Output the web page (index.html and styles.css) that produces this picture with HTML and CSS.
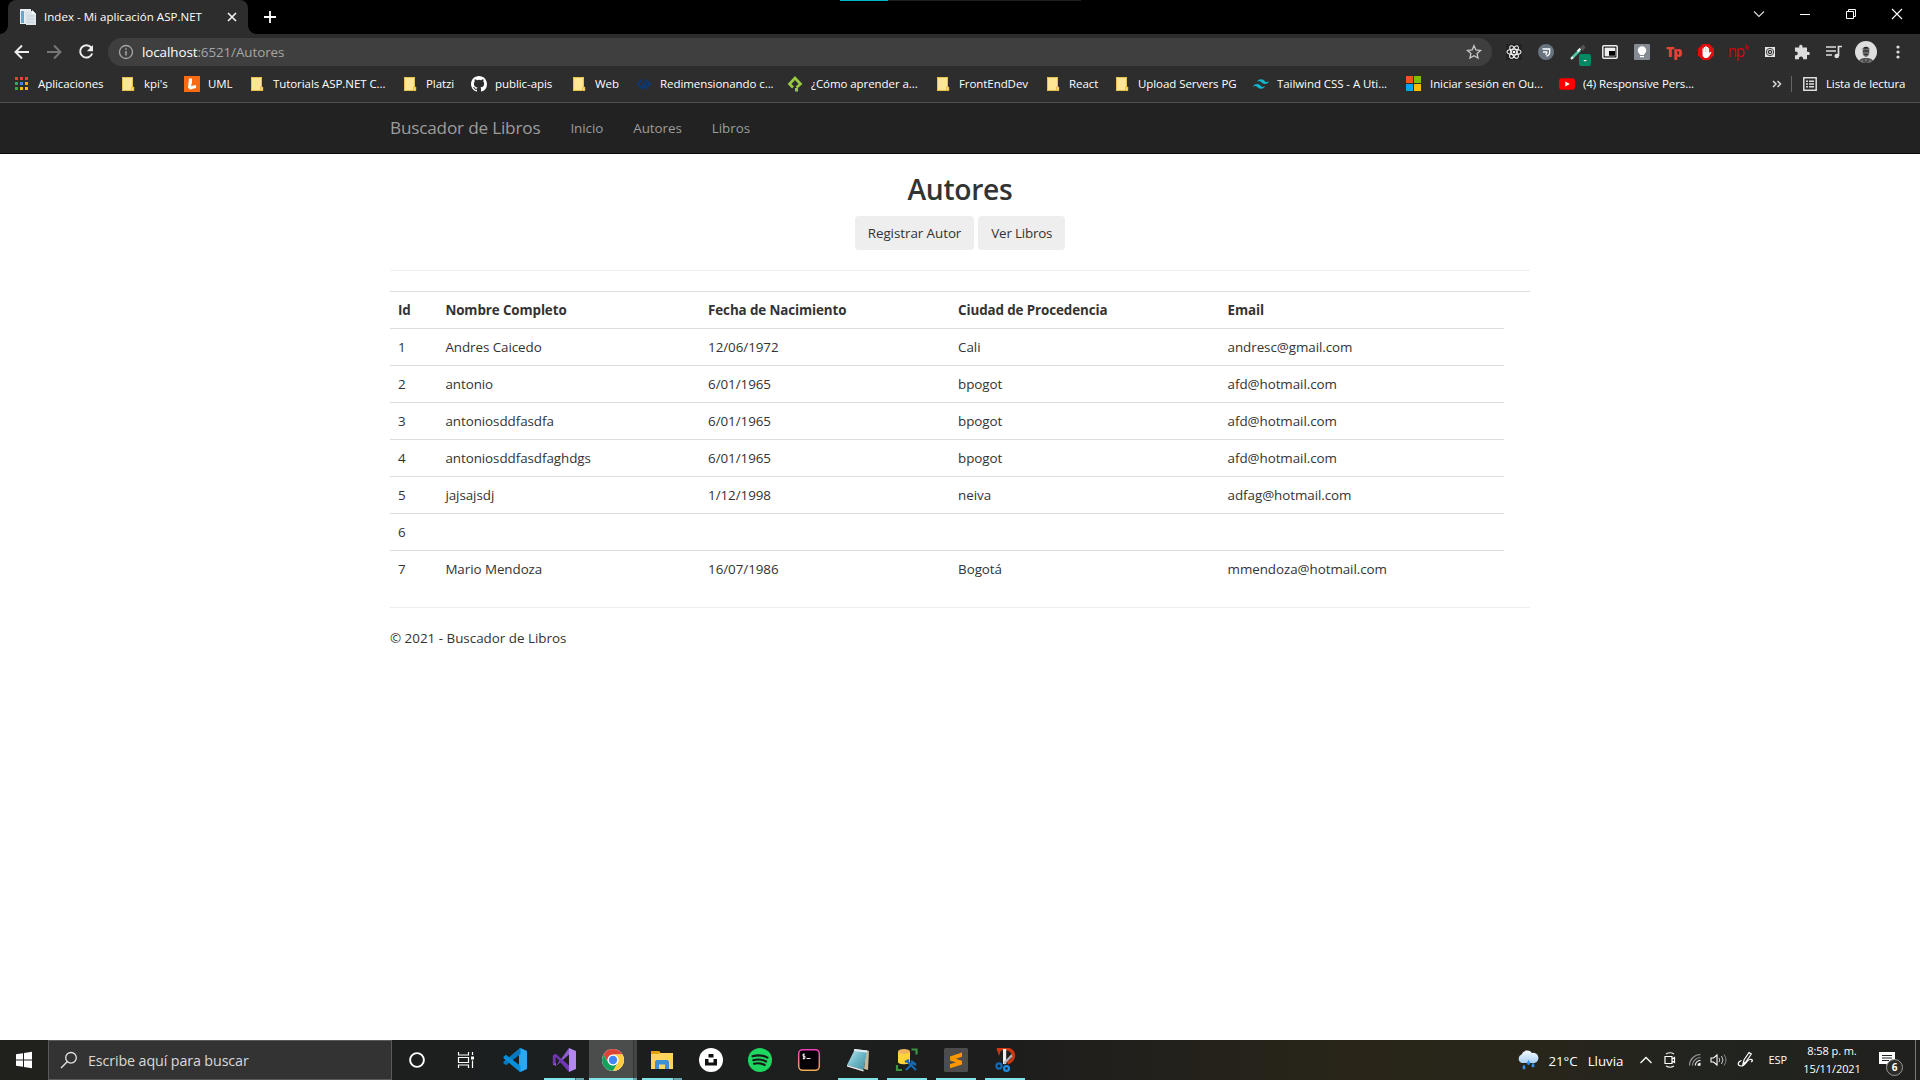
FILE: index.html
```html
<!DOCTYPE html>
<html lang="es">
<head>
<meta charset="utf-8">
<title>Index - Mi aplicación ASP.NET</title>
<link rel="stylesheet" href="styles.css">
</head>
<body>
<svg class="defs" width="0" height="0" aria-hidden="true">
  <symbol id="folder" viewBox="0 0 16 16"><path d="M2 1h11v10h1v4H2z" fill="#ffe694"/><path d="M2.5 1.5h10v9.5M13 11v3.500H2.500v-13" fill="none" stroke="#e8c04c"/><path d="M11.500 11h2.300v3.500h-2.300z" fill="#ffe07c" stroke="#e3b53b" stroke-width=".8"/></symbol>
</svg>
<div class="screen">
  <header class="browser">
    <div class="tabstrip">
      <div class="tab">
        <svg width="16" height="16" viewBox="0 0 16 16"><path d="M0 0h11v15H0z" fill="#e9edf0"/><path d="M1 2h3v12H1z" fill="#68a5cd"/><path d="M5 2h8l3 3v11H6z" fill="#dce5ea"/><path d="M12 1v4h4z" fill="#fff"/><path d="M7 7h7M7 10h7M7 13h7" stroke="#c3cfd6"/></svg>
        <span class="tab-title">Index - Mi aplicación ASP.NET</span>
        <svg class="tab-close" width="10" height="10" viewBox="0 0 10 10"><path d="M1 1l8 8M9 1l-8 8" stroke="#f1f1f1" stroke-width="1.700"/></svg>
      </div>
      <svg class="new-tab" width="12" height="12" viewBox="0 0 12 12"><path d="M6 0v12M0 6h12" stroke="#fff" stroke-width="1.800"/></svg>
      <div class="load-strip"><i></i><b></b></div>
      <div class="window-controls">
        <span><svg width="12" height="12" viewBox="0 0 12 12"><path d="M1 3.500l5 5 5-5" fill="none" stroke="#ddd" stroke-width="1.100"/></svg></span>
        <span><svg width="12" height="12" viewBox="0 0 12 12"><path d="M1 6.500h10" stroke="#fff"/></svg></span>
        <span><svg width="12" height="12" viewBox="0 0 12 12"><path d="M1.500 3.500h7v7h-7zM3.500 3.500v-2h7v7h-2" fill="none" stroke="#fff"/></svg></span>
        <span><svg width="12" height="12" viewBox="0 0 12 12"><path d="M1 1l10 10M11 1L1 11" stroke="#fff" stroke-width="1.100"/></svg></span>
      </div>
    </div>
    <div class="toolbar">
      <div class="nav-buttons">
        <svg width="16" height="16" viewBox="0 0 16 16"><path d="M15 8H2M8 1.500L1.500 8 8 14.500" fill="none" stroke="#eee" stroke-width="1.900"/></svg>
        <svg width="16" height="16" viewBox="0 0 16 16"><path d="M1 8h13M8 1.500L14.500 8 8 14.500" fill="none" stroke="#777" stroke-width="1.900"/></svg>
        <svg width="16" height="16" viewBox="0 0 16 16"><path d="M13.200 3.500A6.200 6.200 0 1 0 14.200 9.500" fill="none" stroke="#eee" stroke-width="2"/><path d="M15 1v6.200H8.800z" fill="#eee"/></svg>
      </div>
      <div class="omnibox">
        <svg width="16" height="16" viewBox="0 0 16 16"><circle cx="8" cy="8" r="6.500" fill="none" stroke="#a6a6a6" stroke-width="1.300"/><path d="M8 7v4.500M8 4.200v1.600" stroke="#a6a6a6" stroke-width="1.500"/></svg>
        <span class="url"><em>localhost</em>:6521/Autores</span>
        <svg width="16" height="16" viewBox="0 0 16 16"><path d="M8 1.700l1.900 4.200 4.600.5-3.400 3.100.9 4.500-4-2.300-4 2.300.9-4.500L1.500 6.400l4.600-.5z" fill="none" stroke="#c9c9c9" stroke-width="1.300"/></svg>
      </div>
      <div class="extensions">
        <span><svg width="16" height="16" viewBox="0 0 16 16"><path d="M0 0h16v16H0z" fill="#222"/><g fill="none" stroke="#eee" stroke-width="1.100"><ellipse cx="8" cy="8" rx="7" ry="2.700"/><ellipse cx="8" cy="8" rx="7" ry="2.700" transform="rotate(60 8 8)"/><ellipse cx="8" cy="8" rx="7" ry="2.700" transform="rotate(120 8 8)"/></g><circle cx="8" cy="8" r="1.300" fill="#fff"/></svg></span>
        <span><svg width="16" height="16" viewBox="0 0 16 16"><circle cx="8" cy="8" r="8" fill="#68747f"/><path d="M4.500 5h7.200v3c0 2.200-1 3.600-3.200 4.200M5 8h3.800v.8c0 1-.6 1.600-1.500 1.900" fill="none" stroke="#fff" stroke-width="1.300"/></svg></span>
        <span class="dropper"><svg width="18" height="16" viewBox="0 0 18 16"><path d="M3 14L11 6" stroke="#52c4a3" stroke-width="2.600"/><path d="M2 15l2-2M8.500 7.500l3-3" stroke="#e8f5f0" stroke-width="2.200"/><path d="M11 4l3 3 2.500-4L14 .5z" fill="#555"/></svg><b>-</b></span>
        <span><svg width="16" height="16" viewBox="0 0 16 16"><rect x=".8" y="1.800" width="14.400" height="12.400" rx="1" fill="#222" stroke="#ededed" stroke-width="1.500"/><path d="M3 4h10v8H3z" fill="#555" stroke="#ccc" stroke-width=".8"/><path d="M7 7h6v4.500H7z" fill="#000"/><path d="M3 4h10v3H7v5H3z" fill="#eee"/></svg></span>
        <span><svg width="16" height="16" viewBox="0 0 16 16"><rect width="16" height="16" rx="1" fill="#858b92"/><circle cx="8" cy="6.500" r="4.200" fill="#fff"/><path d="M6 9h4v2H6zM6 12h4v1.200H6z" fill="#fff"/></svg></span>
        <span class="tp">Tp</span>
        <span><svg width="16" height="16" viewBox="0 0 16 16"><path d="M4.700 0h6.600L16 4.700v6.600L11.300 16H4.700L0 11.300V4.700z" fill="#e40d0d"/><path d="M4.500 8V4.500h1.300V3h1.400v-.7h1.500V3h1.400v1.300h1V9l1.400-1.300 1 .7-2.700 4.300-1.700 1.200H6.700L4.700 12z" fill="#fff"/><path d="M5.900 4v4M7.500 3v5M9.200 3.500V8" stroke="#e88" stroke-width=".35"/></svg></span>
        <span class="np">np<svg width="4" height="7" viewBox="0 0 4 7"><path d="M1 0v4h1.500M3 2v4" fill="none" stroke="#d8000c" stroke-width="1.200"/></svg></span>
        <span><svg width="10" height="10" viewBox="0 0 10 10"><path d="M0 0h10v10H0z" fill="#e6e6e6"/><circle cx="5" cy="5" r="3.700" fill="none" stroke="#444"/><circle cx="5" cy="5" r="1.800" fill="#aaa" stroke="#222"/></svg></span>
        <span><svg width="16" height="16" viewBox="0 0 16 16"><path d="M1 3.500h4.300C4.700 1.500 5.600.7 6.800.7s2.200.8 1.600 2.800H13v4.300c2-.5 2.800.3 2.800 1.600S15 11.400 13 10.900V15.200H9c.4-1.900-.6-2.700-2-2.700s-2.400.8-2 2.700H1v-4c1.900.4 2.700-.5 2.700-1.800S2.900 7.300 1 7.700z" fill="#ddd"/></svg></span>
        <span><svg width="16" height="14" viewBox="0 0 16 14"><path d="M0 2h10M0 6h10M0 10h6" stroke="#ddd" stroke-width="1.600"/><path d="M12.500 11V1.500H16" fill="none" stroke="#ddd" stroke-width="1.700"/><circle cx="10.700" cy="11" r="2.300" fill="#ddd"/></svg></span>
        <span class="avatar"><svg width="22" height="22" viewBox="0 0 22 22"><clipPath id="av"><circle cx="11" cy="11" r="11"/></clipPath><g clip-path="url(#av)"><path d="M0 0h22v22H0z" fill="#dedede"/><path d="M3 22c1-4 4-5 8-5s7 1 8 5z" fill="#4c4c4c"/><ellipse cx="11" cy="11" rx="3.400" ry="5" fill="#666"/><path d="M7.200 9.500c0-5 7.600-5 7.600 0l-1-2H8.200z" fill="#222"/><path d="M8 10h6M9.500 13.500h3" stroke="#222"/><path d="M6 20h2M10 19h2M14 20h2" stroke="#999"/></g></svg></span>
        <span><svg width="4" height="16" viewBox="0 0 4 16"><g fill="#ddd"><circle cx="2" cy="3" r="1.600"/><circle cx="2" cy="8" r="1.600"/><circle cx="2" cy="13" r="1.600"/></g></svg></span>
      </div>
    </div>
    <nav class="bookmarks">
      <div class="marks">
        <a><svg viewBox="0 0 16 16"><g><path d="M1 1h3v3H1zM6 1h3v3H6zM11 1h3v3h-3z" fill="#ea4335"/><path d="M1 6h3v3H1z" fill="#34a853"/><path d="M6 6h3v3H6z" fill="#4285f4"/><path d="M11 6h3v3h-3z" fill="#f6ad01"/><path d="M1 11h3v3H1z" fill="#34a853"/><path d="M6 11h3v3H6zM11 11h3v3h-3z" fill="#fbbc05"/></g></svg>Aplicaciones</a>
        <a><svg><use href="#folder"/></svg>kpi's</a>
        <a><svg viewBox="0 0 16 16"><path d="M0 0h16v16H0z" fill="#f96b13"/><path d="M5 2.500h3v4L7 10l5-1v3l-6 1.500-2-2z" fill="#fff"/></svg>UML</a>
        <a><svg><use href="#folder"/></svg>Tutorials ASP.NET C...</a>
        <a><svg><use href="#folder"/></svg>Platzi</a>
        <a><svg viewBox="0 0 16 16"><path fill="#fff" d="M8 0C3.580 0 0 3.580 0 8c0 3.540 2.290 6.530 5.470 7.590.4.070.55-.17.55-.38 0-.19-.01-.82-.01-1.490-2.010.37-2.530-.49-2.690-.94-.09-.23-.48-.94-.82-1.130-.28-.15-.68-.52-.01-.53.63-.01 1.080.58 1.230.82.72 1.210 1.870.87 2.330.66.070-.52.28-.87.51-1.070-1.780-.2-3.640-.89-3.640-3.950 0-.87.31-1.590.82-2.150-.08-.2-.36-1.020.08-2.120 0 0 .67-.21 2.200.82a7.600 7.600 0 0 1 4 0c1.530-1.040 2.200-.82 2.200-.82.44 1.100.16 1.920.08 2.120.51.56.82 1.270.82 2.150 0 3.070-1.870 3.750-3.650 3.950.29.25.54.73.54 1.480 0 1.070-.01 1.930-.01 2.200 0 .21.15.46.55.38A8 8 0 0 0 16 8c0-4.420-3.580-8-8-8z"/></svg>public-apis</a>
        <a><svg><use href="#folder"/></svg>Web</a>
        <a><svg viewBox="0 0 16 16"><path d="M6 3.500L1.800 8 6 12.500 10.500 8 8 5.500M10 3.500L14.200 8 10 12.500 5.500 8 8 10.500" fill="none" stroke="#0b3978" stroke-width="1.800"/></svg>Redimensionando c...</a>
        <a><svg viewBox="0 0 16 16"><path d="M6 11.500L2.500 8 8 2l5.500 6-4 3.500" fill="none" stroke="#98ca3f" stroke-width="2.700"/><path d="M8 12h3v3.500H8z" fill="#98ca3f"/></svg>¿Cómo aprender a...</a>
        <a><svg><use href="#folder"/></svg>FrontEndDev</a>
        <a><svg><use href="#folder"/></svg>React</a>
        <a><svg><use href="#folder"/></svg>Upload Servers PG</a>
        <a><svg viewBox="0 0 24 24"><path fill="#12b5cb" d="M12 4.800c-3.200 0-5.200 1.600-6 4.800 1.200-1.600 2.600-2.200 4.200-1.800.913.228 1.565.89 2.288 1.624C13.666 10.618 15.027 12 18 12c3.200 0 5.200-1.600 6-4.800-1.200 1.600-2.600 2.200-4.200 1.800-.913-.228-1.565-.89-2.288-1.624C16.337 6.182 14.976 4.800 12 4.800zM6 12c-3.200 0-5.200 1.600-6 4.800 1.200-1.600 2.600-2.200 4.200-1.800.913.228 1.565.89 2.288 1.624C7.666 17.818 9.027 19.200 12 19.200c3.200 0 5.200-1.600 6-4.800-1.200 1.600-2.600 2.200-4.200 1.800-.913-.228-1.565-.89-2.288-1.624C10.337 13.382 8.976 12 6 12z"/></svg>Tailwind CSS - A Uti...</a>
        <a><svg viewBox="0 0 16 16"><path d="M0 0h7v7H0z" fill="#f35325"/><path d="M8 0h7v7H8z" fill="#81bc06"/><path d="M0 8h7v7H0z" fill="#05a6f0"/><path d="M8 8h7v7H8z" fill="#ffba08"/></svg>Iniciar sesión en Ou...</a>
        <a><svg viewBox="0 0 16 16"><rect y="2.200" width="16" height="11.600" rx="3" fill="#f00"/><path d="M6.300 5.500v5L10.800 8z" fill="#fff"/></svg>(4) Responsive Pers...</a>
      </div>
      <svg class="overflow" width="10" height="8" viewBox="0 0 10 8"><path d="M1 1l3 3-3 3M5.500 1l3 3-3 3" fill="none" stroke="#ddd" stroke-width="1.500"/></svg>
      <a class="reading"><svg width="14" height="14" viewBox="0 0 14 14"><path d="M.8.8h12.400v12.400H.8z" fill="none" stroke="#ddd" stroke-width="1.500"/><path d="M3 4.200h2M6 4.200h5M3 7h2M6 7h5M3 9.800h2M6 9.800h5" stroke="#ddd" stroke-width="1.600"/></svg>Lista de lectura</a>
    </nav>
  </header>

  <nav class="navbar">
    <div class="container">
      <a class="brand">Buscador de Libros</a>
      <a>Inicio</a>
      <a>Autores</a>
      <a>Libros</a>
    </div>
  </nav>

  <main class="container content">
    <h2>Autores</h2>
    <div class="actions"><button>Registrar Autor</button><button>Ver Libros</button></div>
    <hr>
    <table class="table">
      <colgroup><col class="c-id"><col class="c-name"><col class="c-date"><col class="c-city"><col class="c-mail"><col></colgroup>
      <tr><th>Id</th><th>Nombre Completo</th><th>Fecha de Nacimiento</th><th>Ciudad de Procedencia</th><th>Email</th><th></th></tr>
      <tr><td>1</td><td>Andres Caicedo</td><td>12/06/1972</td><td>Cali</td><td>andresc@gmail.com</td></tr>
      <tr><td>2</td><td>antonio</td><td>6/01/1965</td><td>bpogot</td><td>afd@hotmail.com</td></tr>
      <tr><td>3</td><td>antoniosddfasdfa</td><td>6/01/1965</td><td>bpogot</td><td>afd@hotmail.com</td></tr>
      <tr><td>4</td><td>antoniosddfasdfaghdgs</td><td>6/01/1965</td><td>bpogot</td><td>afd@hotmail.com</td></tr>
      <tr><td>5</td><td>jajsajsdj</td><td>1/12/1998</td><td>neiva</td><td>adfag@hotmail.com</td></tr>
      <tr><td>6</td><td></td><td></td><td></td><td></td></tr>
      <tr><td>7</td><td>Mario Mendoza</td><td>16/07/1986</td><td>Bogotá</td><td>mmendoza@hotmail.com</td></tr>
    </table>
    <hr>
    <footer>© 2021 - Buscador de Libros</footer>
  </main>

  <div class="taskbar">
    <div class="start"><svg width="18" height="18" viewBox="0 0 18 18"><path d="M1 3.200l7-1v6.300H1zM9 2l8-1.200v7.700H9zM1 9.500h7v6.300l-7-1zM9 9.500h8v7.700L9 16z" fill="#fff"/></svg></div>
    <div class="search"><svg width="18" height="18" viewBox="0 0 18 18"><circle cx="11" cy="6.800" r="5.300" fill="none" stroke="#e3e3e3" stroke-width="1.300"/><path d="M7.200 10.700L1 17" stroke="#e3e3e3" stroke-width="1.400"/></svg><span>Escribe aquí para buscar</span></div>
    <div class="apps">
      <span><svg width="18" height="18" viewBox="0 0 18 18"><circle cx="9" cy="9" r="6.900" fill="none" stroke="#fff" stroke-width="1.900"/></svg></span>
      <span><svg width="18" height="18" viewBox="0 0 18 18"><path d="M1.500 1v3h10V1M1.500 17v-3h10v3M1.500 6.500h10v5h-10zM15.500 1v3M15.500 9.500V17" fill="none" stroke="#fff" stroke-width="1.200"/><path d="M14 5.500h3v3h-3z" fill="#fff"/></svg></span>
      <span><svg width="24" height="24" viewBox="0 0 24 24"><path d="M17.500 0L24 3v18l-6.500 3-1.500-1V1z" fill="#29a9f2"/><path d="M17.500 0v6L3 17.200.5 15.300v-1.500L16.700.2z" fill="#0a78bf"/><path d="M17.500 24v-6L3 6.800.5 8.700v1.500L16.700 23.800z" fill="#0a8ed9"/></svg></span>
      <span class="run multi"><svg width="24" height="24" viewBox="0 0 24 24"><path d="M17 0l7 3v18l-7 3z" fill="#b288ef"/><path d="M17 0v6.500L4 18l-3-1.500v-9L4 6v12" fill="#8f5bd0"/><path d="M17 24v-6.500L4 6 .8 7.500v9L3.500 15V9z" fill="#7136b5"/><path d="M3.500 9v6L7 12zM17 8v8l-5-4z" fill="#202020"/></svg></span>
      <span class="run active"><svg width="24" height="24" viewBox="0 0 24 24"><circle cx="12" cy="12" r="11" fill="#fff"/><path d="M2.500 6.500A11 11 0 0 1 21.500 6.500H12A5.500 5.500 0 0 0 7.200 14.700z" fill="#db4437"/><path d="M2.500 6.500A11 11 0 0 0 12 23l4.800-8.250A5.500 5.500 0 0 1 7.200 14.700z" fill="#14a05a"/><path d="M21.500 6.500A11 11 0 0 1 12 23l4.800-8.250A5.500 5.500 0 0 0 12 6.500z" fill="#ffcd40"/><circle cx="12" cy="12" r="5.300" fill="#fff"/><circle cx="12" cy="12" r="4.200" fill="#4285f4"/></svg></span>
      <span class="run multi"><svg width="22" height="22" viewBox="0 0 22 22"><path d="M0 2h8l1.500 2H22v16H0z" fill="#ffd45e"/><path d="M0 2h8l1 2-1 1H0z" fill="#e4a00e"/><path d="M4 20v-7.500L5.500 11h11l1.500 1.500V20h-4v-4.500H8V20z" fill="#3c91d6"/></svg></span>
      <span><svg width="24" height="24" viewBox="0 0 24 24"><circle cx="12" cy="12" r="12" fill="#fff"/><path d="M9.500 6h5v3.500h-5zM6 11h3.500v3.500h5V11H18v6.500H6z" fill="#111"/></svg></span>
      <span><svg width="24" height="24" viewBox="0 0 24 24"><circle cx="12" cy="12" r="12" fill="#1ed760"/><path d="M4.500 8.300c5-1.500 10.500-1.100 15 1.300M5.300 12.200c4.500-1.300 9-.8 12.800 1.300M6 15.800c3.800-1 7.500-.6 10.700 1.200" fill="none" stroke="#191919" stroke-width="2.100" stroke-linecap="round"/></svg></span>
      <span><svg width="24" height="24" viewBox="0 0 24 24"><defs><linearGradient id="tg" x2="0" y2="1"><stop stop-color="#ee3fbd"/><stop offset="1" stop-color="#f1ad55"/></linearGradient></defs><rect x="1.700" y="1.700" width="20.600" height="20.600" rx="4" fill="#050005" stroke="url(#tg)" stroke-width="1.500"/><path d="M7.500 6.300H6v2h2v2H5.800M6.800 5.500v6M9.500 10.500h4" fill="none" stroke="#eee" stroke-width="1"/></svg></span>
      <span class="run"><svg width="24" height="24" viewBox="0 0 24 24"><defs><linearGradient id="ng" x2="1" y2="1"><stop stop-color="#c5edf3"/><stop offset=".5" stop-color="#6fb9c8"/><stop offset="1" stop-color="#3f8fa3"/></linearGradient></defs><path d="M20 2l3 1-1 19-4-1z" fill="#c5b99c"/><path d="M9 1l12 1.500L17.500 22 1 17z" fill="url(#ng)"/><path d="M1 17l16.500 5v1.500L1 18.500z" fill="#f3f3f3"/><path d="M8 2l13 1.500" stroke="#e4eef0" stroke-width="2"/></svg></span>
      <span class="run"><svg width="24" height="24" viewBox="0 0 24 24"><path d="M3 4v10c0 3 12 3 12 0V4z" fill="#ffd43a"/><ellipse cx="9" cy="3.500" rx="6" ry="2.500" fill="#efb35e"/><path d="M16.500 1.500h5v5M2 17v5h5" fill="none" stroke="#3c9445" stroke-width="2.200"/><path d="M11 22l8-8M12 13l9 9M10 14l4-2M16 13l5 4" stroke="#176aaf" stroke-width="2.300"/></svg></span>
      <span class="run"><svg width="24" height="24" viewBox="0 0 24 24"><rect width="24" height="24" rx="1.500" fill="#4d4d4d"/><path d="M6 8.500L18 4.500v4.300l-6.200 2L18 12.700v3.800L6 20.300v-4l6.200-2L6 12.400z" fill="#ff9800"/></svg></span>
      <span class="run"><svg width="24" height="24" viewBox="0 0 24 24"><path d="M4 2c8-3 16-1 16.500 5 .3 4-2.500 7-6 8" fill="none" stroke="#cf3811" stroke-width="3.200"/><path d="M4 1l4 1-2 6z" fill="#cf3811"/><path d="M10 1h3.200v15H10z" fill="#eee"/><path d="M18.500 6l-8 8.500 1 2 8-8z" fill="#b5b5b5"/><circle cx="6" cy="18" r="2.600" fill="none" stroke="#1269b5" stroke-width="2.200"/><circle cx="13.500" cy="20.500" r="2.400" fill="none" stroke="#1c91e5" stroke-width="2.200"/></svg></span>
    </div>
    <div class="tray">
      <svg class="weather" width="22" height="22" viewBox="0 0 22 22"><defs><linearGradient id="wg" x2="0" y2="1"><stop stop-color="#f4faff"/><stop offset="1" stop-color="#a9d0f3"/></linearGradient></defs><path d="M5 14a4.500 4.500 0 0 1-.5-8.500A6 6 0 0 1 15 4a5 5 0 0 1 2.500 10z" fill="url(#wg)"/><path d="M7 15.500c2.600 3.500 1.200 5 0 5s-2.600-1.500 0-5zM11.500 11c2.600 3.500 1.200 5 0 5s-2.600-1.500 0-5zM16 13.500c2.600 3.500 1.200 5 0 5s-2.600-1.500 0-5z" fill="#2f93ea"/></svg>
      <span class="temp">21°C</span><span class="rain">Lluvia</span>
      <svg class="up" width="14" height="10" viewBox="0 0 14 10"><path d="M1.500 8L7 2.500 12.500 8" fill="none" stroke="#fff" stroke-width="1.300"/></svg>
      <svg class="meet" width="14" height="16" viewBox="0 0 14 16"><path d="M3 2c2.500-1.500 5.500-1.500 8 0M3 14c2.500 1.500 5.500 1.500 8 0" fill="none" stroke="#eee" stroke-width="1.100"/><path d="M2 4.500h7v7H2zM9 7l2.500-1.500v5L9 9" fill="none" stroke="#fff" stroke-width="1.200"/></svg>
      <svg class="wifi" width="14" height="14" viewBox="0 0 14 14"><g fill="none" stroke-width="1.200"><path d="M1.500 12.500A11 11 0 0 1 12.500 1.500M4.500 12.500a8 8 0 0 1 8-8" stroke="#969696"/><path d="M7.300 12.500a5.200 5.200 0 0 1 5.200-5.200" stroke="#ddd"/></g><path d="M9.500 12.800a3 3 0 0 1 3-3v3z" fill="#fff"/></svg>
      <svg class="sound" width="17" height="14" viewBox="0 0 17 14"><path d="M1 5h2.500L7 2v10L3.500 9H1z" fill="none" stroke="#fff" stroke-width="1.100"/><path d="M9 4.800q1.500 2.200 0 4.400M11.500 3q3 4 0 8" fill="none" stroke="#ccc"/><path d="M14 1.500q4 5.500 0 11" fill="none" stroke="#888"/></svg>
      <svg class="pen" width="18" height="18" viewBox="0 0 18 18"><path d="M6 13l1-4 5-7.500 2.300 1.500-5.500 8zM4.500 9.500C0 11 .5 15 4 15c5 0 5-6 9-6.500 3-.4 3 2 1 2.500" fill="none" stroke="#fff" stroke-width="1.200"/></svg>
      <span class="lang">ESP</span>
      <span class="clock"><b>8:58 p. m.</b><b>15/11/2021</b></span>
      <div class="notify"><svg width="16" height="16" viewBox="0 0 16 16"><path d="M0 0h16v12h-5v4l-4-4H0z" fill="#fff"/><path d="M3 3.500h10M3 6h10M3 8.500h7" stroke="#222" stroke-width="1.100"/></svg><b>6</b></div>
    </div>
  </div>
</div>
</body>
</html>
```
FILE: styles.css
```css
* { box-sizing: border-box; }
body { margin: 0; background: #fff; color: #333; font: 13.4px/20px "Open Sans", "Noto Sans", sans-serif; letter-spacing: -.09px; }
svg { display: block; flex: none; }
.defs { display: none; }
.screen { width: 1920px; height: 1080px; display: flex; flex-direction: column; overflow: hidden; }

/* browser window */
.browser { height: 103px; flex: none; background: #2d2d2d; border-bottom: 1px solid #505050; color: #fff; font-size: 11.5px; letter-spacing: -.07px; }
.tabstrip { height: 34px; background: #000; display: flex; padding-left: 8px; position: relative; }
.tab { width: 240px; height: 34px; border-radius: 8px 8px 0 0; background: #2d2d2d; display: flex; align-items: center; padding: 0 15px 0 12px; position: relative; }
.tab::before, .tab::after { content: ""; position: absolute; bottom: 0; width: 8px; height: 8px; }
.tab::before { left: -8px; background: radial-gradient(circle at 0 0, transparent 7.5px, #2d2d2d 8px); }
.tab::after { right: -8px; background: radial-gradient(circle at 100% 0, transparent 7.5px, #2d2d2d 8px); }
.tab-title { margin-left: 8px; white-space: nowrap; letter-spacing: .03px; }
.tab-close { margin-left: auto; margin-right: -4px; }
.new-tab { margin: 11px 0 0 16px; }
.load-strip { position: absolute; left: 840px; top: 0; width: 241px; height: 1px; display: flex; }
.load-strip i { width: 48px; background: #00b7c3; }
.load-strip b { flex: 1; background: #1f1f1f; }
.window-controls { margin-left: auto; display: flex; height: 28px; }
.window-controls span { width: 46px; display: flex; align-items: center; justify-content: center; }
.toolbar { height: 36px; display: flex; align-items: center; }
.nav-buttons { width: 108px; display: flex; gap: 16px; padding-left: 14px; }
.omnibox { width: 1384px; height: 28px; border-radius: 14px; background: #3f3f3f; display: flex; align-items: center; padding: 0 10px; }
.url { flex: 1; margin-left: 8px; font-size: 13.4px; letter-spacing: -.08px; color: #a6a6a6; }
.url em { font-style: normal; color: #fff; }
.extensions { display: flex; padding-left: 6px; }
.extensions span { width: 32px; height: 24px; display: flex; align-items: center; justify-content: center; position: relative; }
.dropper b { position: absolute; left: 17px; top: 14px; width: 12px; height: 12px; border-radius: 2px; background: #038a62; font-size: 9px; line-height: 11px; text-align: center; }
.extensions .tp { color: #ee4136; font-weight: 800; font-size: 14px; letter-spacing: -1.200px; padding-right: 1px; }
.extensions .np { color: #d8000c; font: 15.5px "Open Sans", sans-serif; letter-spacing: -1.500px; padding-bottom: 3px; }
.np svg { align-self: flex-start; margin: 4px 0 0 1px; }
.bookmarks { height: 28px; display: flex; align-items: center; padding-left: 14px; }
.marks { width: 1758px; display: grid; grid-template-columns: 106px 64px 65px 153px 69px 100px 65px 151px 148px 110px 69px 139px 153px 153px auto; }
.marks a { display: flex; gap: 8px; align-items: center; white-space: nowrap; }
.marks svg { width: 16px; height: 16px; }
.reading { display: flex; align-items: center; gap: 9px; margin-left: 9px; padding-left: 11px; height: 16px; border-left: 1px solid #666; letter-spacing: -.13px; }

/* page */
.container { width: 1140px; margin: 0 auto; }
.navbar { height: 51px; flex: none; background: #222; border-bottom: 1px solid #080808; color: #9d9d9d; }
.navbar .container { display: flex; gap: 30px; line-height: 50px; letter-spacing: -.05px; }
.navbar .brand { font-size: 17.200px; letter-spacing: -.2px; line-height: 50px; }
.content { flex: 1; }
h2 { margin: 19px 0 10px; font-size: 28.2px; font-weight: 600; line-height: 33px; text-align: center; letter-spacing: -.3px; }
.actions { display: flex; justify-content: center; gap: 4px; }
button { height: 34px; padding: 0 13px; border: 0; border-radius: 4px; background: #eee; color: #333; font: inherit; letter-spacing: -.06px; }
button + button { letter-spacing: -.2px; }
hr { margin: 20px 0; border: 0; border-top: 1px solid #eee; }
.table { width: 1140px; table-layout: fixed; border-collapse: collapse; margin-bottom: 19px; }
.table th, .table td { height: 37px; padding: 8px; border-top: 1px solid #ddd; text-align: left; line-height: 20px; }
.c-id { width: 47.400px; } .c-name { width: 262.700px; } .c-date { width: 250px; } .c-city { width: 269.500px; } .c-mail { width: 284.400px; }
.table th { letter-spacing: -.11px; }
.table td { white-space: nowrap; letter-spacing: -.06px; }
.table + hr { margin-top: 19px; }
footer { letter-spacing: 0; }

/* taskbar */
.taskbar { height: 40px; flex: none; display: flex; background: linear-gradient(90deg, #20211c 0, #1c1f1f 500px, #1d1d1d 1000px, #292519 1350px, #28251b 1550px, #22241f 1700px, #20211e); color: #fff; }
.start { width: 48px; display: grid; place-items: center; }
.search { width: 344px; background: #333; border: 1px solid #5b5b5b; display: flex; align-items: center; gap: 10px; padding-left: 11px; font-size: 14.300px; letter-spacing: -.12px; color: #d8d8d8; }
.search span { padding-top: 2px; }
.apps { display: flex; gap: 1px; padding-left: 1px; }
.apps span { width: 48px; height: 40px; display: flex; align-items: center; justify-content: center; position: relative; }
.run::after { content: ""; position: absolute; left: 4px; right: 4px; bottom: 0; height: 2px; background: #83e3ea; }
.run.multi::after { background: linear-gradient(90deg, #83e3ea 31px, #3d6b6e 31px 32px, #63a5aa 32px); }
.apps .active { background: linear-gradient(90deg, #4b4d4c 44px, #313433 44px 45px, #434645 45px); }
.active::after { left: 0; right: 0; background: linear-gradient(90deg, #83e3ea 44px, #63a5aa 44px); }
.tray { margin-left: auto; display: flex; align-items: center; padding-right: 20px; border-right: 1px solid #777; margin-right: 4px; }
.temp, .rain { font-size: 13.300px; letter-spacing: 0; margin-left: 10px; padding-top: 2px; }
.temp { margin-left: 9px; }
.up { margin-left: 15px; }
.meet { margin-left: 10px; }
.wifi { margin-left: 11px; }
.sound { margin-left: 8px; }
.pen { margin-left: 10px; }
.lang { font-size: 11px; margin-left: 14px; }
.clock { width: 60px; margin-left: 15px; display: flex; flex-direction: column; text-align: center; font-size: 11px; line-height: 18px; white-space: nowrap; }
.clock b { font-weight: 400; }
.notify { margin-left: 17px; position: relative; }
.notify b { position: absolute; left: 7px; top: 7px; width: 17px; height: 17px; border: 1px solid #999; border-radius: 50%; background: #2b2c29; font-size: 10px; line-height: 15px; text-align: center; }
```
